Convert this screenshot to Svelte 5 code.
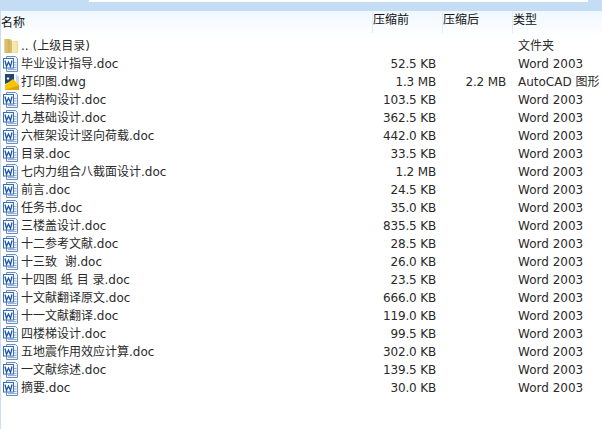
<script>
  const files = [
    ['毕业设计指导.doc', '52.5 KB', '', 'Word 2003'],
    ['打印图.dwg', '1.3 MB', '2.2 MB', 'AutoCAD 图形', 'dwg'],
    ['二结构设计.doc', '103.5 KB', '', 'Word 2003'],
    ['九基础设计.doc', '362.5 KB', '', 'Word 2003'],
    ['六框架设计竖向荷载.doc', '442.0 KB', '', 'Word 2003'],
    ['目录.doc', '33.5 KB', '', 'Word 2003'],
    ['七内力组合八截面设计.doc', '1.2 MB', '', 'Word 2003'],
    ['前言.doc', '24.5 KB', '', 'Word 2003'],
    ['任务书.doc', '35.0 KB', '', 'Word 2003'],
    ['三楼盖设计.doc', '835.5 KB', '', 'Word 2003'],
    ['十二参考文献.doc', '28.5 KB', '', 'Word 2003'],
    ['十三致  谢.doc', '26.0 KB', '', 'Word 2003'],
    ['十四图 纸 目 录.doc', '23.5 KB', '', 'Word 2003'],
    ['十文献翻译原文.doc', '666.0 KB', '', 'Word 2003'],
    ['十一文献翻译.doc', '119.0 KB', '', 'Word 2003'],
    ['四楼梯设计.doc', '99.5 KB', '', 'Word 2003'],
    ['五地震作用效应计算.doc', '302.0 KB', '', 'Word 2003'],
    ['一文献综述.doc', '139.5 KB', '', 'Word 2003'],
    ['摘要.doc', '30.0 KB', '', 'Word 2003']
  ];
</script>

<div class="page">
  <div class="top"><div class="top-white"></div></div>
  <div class="head">
    <span class="h-name">名称</span>
    <span class="h-col h-before">压缩前</span>
    <span class="h-col h-after">压缩后</span>
    <span class="h-col h-type">类型</span>
  </div>
  <div class="list">
    <div class="row">
      <span class="ic">
        <svg width="18" height="18" viewBox="0 0 18 18">
          <path d="M3 2h6l2 2h5q1 0 1 1v10q0 1-1 1H4q-1 0-1-1z" fill="#ecd58c"/>
          <path d="M4 2h5l2 2v12H4z" fill="#d9bd6a"/>
          <path d="M11 4l5 1v10l-5 1z" fill="#f6e7ae"/>
          <path d="M7 3h2v13H7z" fill="#c9ac5e" opacity=".6"/>
        </svg>
      </span>
      <span class="name">.. (上级目录)</span><span class="before"></span><span class="after"></span><span class="type">文件夹</span>
    </div>
    {#each files as f}
      <div class="row">
        <span class="ic">
          {#if f[4]}
            <svg width="18" height="18" viewBox="0 0 18 18">
              <path d="M4 1h11l3 3v13H4z" fill="#f4f8ff"/>
              <path d="M4 1h9v6l-9 4z" fill="#23466e"/>
              <path d="M7 4l1.500 1.500L7 7 5.500 5.500z" fill="#fff"/>
              <path d="M4 12l8-6 6 6v5H4z" fill="#f7c600"/>
              <path d="M4 17l14-5v5z" fill="#e5a400"/>
              <path d="M15 1l3 3v8l-3-3z" fill="#c9d8ee"/>
            </svg>
          {:else}
            <svg width="18" height="18" viewBox="0 0 18 18">
              <path d="M5.500 1.500h9l2 2v13h-11z" fill="#eef4fc" stroke="#6c8fc0"/>
              <path d="M13 7.500h2.500M13 10h2.500M13 12.500h2.500M7 14.500h8.500" stroke="#93afd6"/>
              <rect x="2.500" y="3.500" width="10" height="9.500" fill="#fff" stroke="#3b6db5"/>
              <path d="M4 5.500l1.500 6 2-4.500 2 4.500 1.500-6" fill="none" stroke="#1f55a8" stroke-width="1.300"/>
            </svg>
          {/if}
        </span>
        <span class="name">{f[0]}</span><span class="before">{f[1]}</span><span class="after">{f[2]}</span><span class="type">{f[3]}</span>
      </div>
    {/each}
  </div>
</div>

<style>
  :global(body) { margin: 0; background: #fff; }
  .page {
    width: 602px;
    height: 429px;
    overflow: hidden;
    font: 12px/18px "DejaVu Sans", "Noto Sans CJK SC", sans-serif;
    color: #2a2a2a;
    background: linear-gradient(to right, #c9dcf2 0, #c9dcf2 1px, #fff 1px);
  }
  .top { height: 11px; background: #c5dcf5; }
  .top-white { height: 2px; margin-left: 89px; margin-right: 14px; background: #fff; }
  .head {
    height: 26px;
    display: flex;
    align-items: center;
    position: relative;
    background: linear-gradient(#eff8ff, #fff);
    color: #111;
    margin-left: 1px;
  }
  .h-name { position: relative; top: -1px; }
  .h-col { position: absolute; top: 0; height: 22px; border-left: 1px solid #e4ebf3; }
  .h-before { left: 371px; }
  .h-after { left: 441px; }
  .h-type { left: 511px; }
  .row { height: 18px; display: flex; align-items: center; white-space: pre; }
  .ic { width: 20px; height: 18px; flex: none; margin-left: 1px; }
  .ic svg { display: block; }
  .name { width: 349px; flex: none; }
  .before { width: 66px; flex: none; text-align: right; letter-spacing: -0.15px; }
  .after { width: 70px; flex: none; text-align: right; letter-spacing: -0.15px; }
  .type { margin-left: 12px; flex: none; }
</style>
